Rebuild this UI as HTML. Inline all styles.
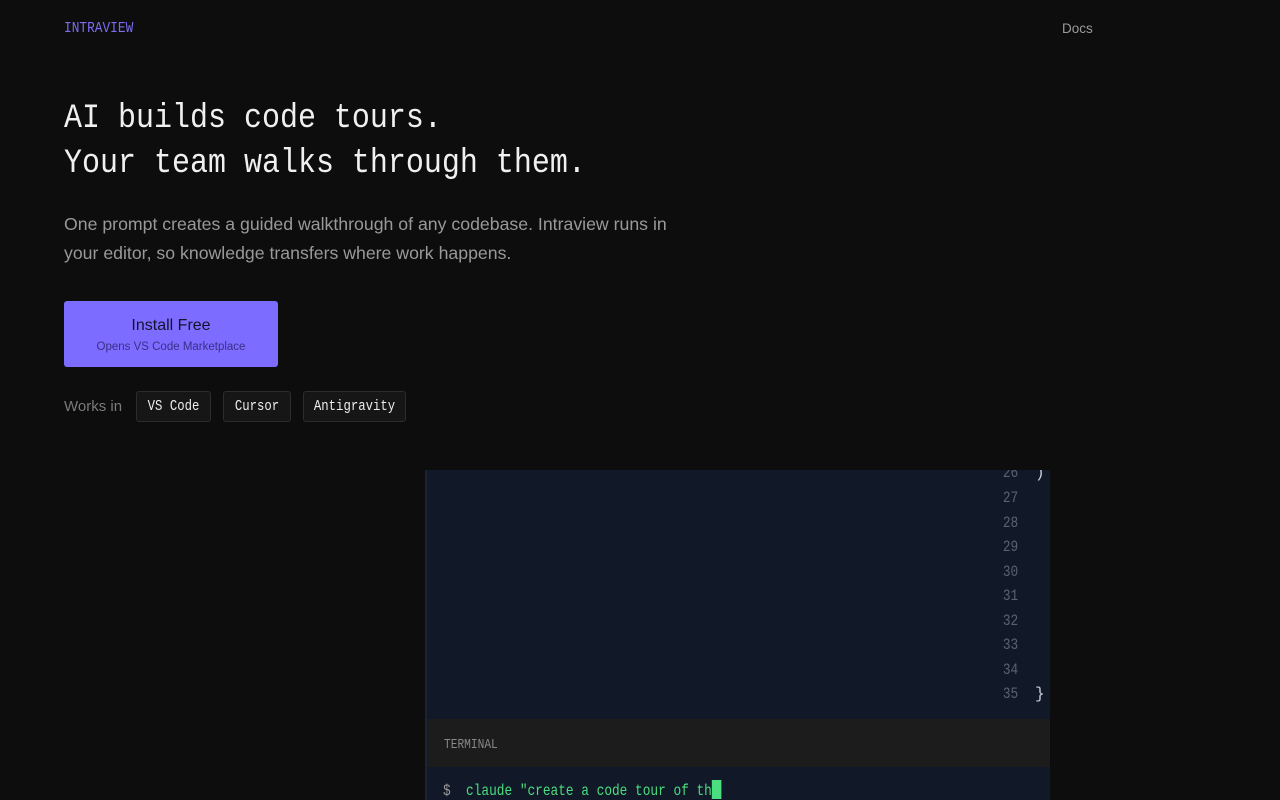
<!DOCTYPE html>
<html><head><meta charset="utf-8"><style>
*{margin:0;padding:0;box-sizing:border-box}
body{width:1280px;height:800px;overflow:hidden;background:#0d0d0e;font-family:"Liberation Sans",sans-serif;position:relative}
.mono{font-family:"Liberation Mono","DejaVu Sans Mono",monospace}
.c{display:inline-block;transform-origin:left center;white-space:pre}
.logo{position:absolute;left:64px;top:20px;font-size:15px;color:#7b6cf0}
.logo .c{transform:scaleX(.855)}
.docs{position:absolute;left:1062px;top:21px;font-size:13.5px;color:#9a9a9a}
h1{position:absolute;left:64px;top:97px;font-weight:400;font-size:34px;line-height:45px;color:#f0f0f0;white-space:nowrap}
h1 .c{transform:scaleX(.882)}
.sub{position:absolute;left:64px;top:210px;width:640px;font-size:17.7px;line-height:29px;color:#999}
.btn{position:absolute;left:64px;top:301px;width:214px;height:66px;background:#7c6cff;border-radius:3px;text-align:center}
.btn .a{font-size:16px;color:#16122e;margin-top:16px}
.btn .b{font-size:11.5px;color:#3a2f88;margin-top:6px}
.works{position:absolute;left:64px;top:398px;font-size:15px;color:#7a7a7a}
.tag{position:absolute;top:391px;height:31px;border:1px solid #2c2c2c;background:#161616;border-radius:3px;color:#eee;font-size:15px;line-height:29px;text-align:center;overflow:hidden}
.tag .c{transform:scaleX(.82);transform-origin:center}
.ed{position:absolute;left:425px;top:470px;width:625px;height:249px;background:#111827;border-left:2px solid #1c2333;overflow:hidden}
.ln{position:absolute;right:32px;width:30px;text-align:right;color:#5a6272;font-size:16px}
.ln .c{transform:scaleX(.8);transform-origin:right center}
.br{position:absolute;left:608px;color:#c8ccd4;font-size:16px}
.th{position:absolute;left:425px;top:719px;width:625px;height:48px;background:#1c1c1c;border-left:2px solid #1c2333}
.th span{position:absolute;left:17px;top:18px;font-size:14px;color:#888;transform:scaleX(.8);transform-origin:left}
.tb{position:absolute;left:425px;top:767px;width:625px;height:33px;background:#111827;border-left:2px solid #1c2333}
.tb .t{position:absolute;left:16px;top:13px;font-size:16px;color:#4ade80;white-space:pre;transform:scaleX(.8);transform-origin:left}
.cur{display:inline-block;width:12px;height:19px;background:#4ade80;vertical-align:-4px}
</style></head><body>
<div class="logo mono"><span class="c">INTRAVIEW</span></div>
<div class="docs">Docs</div>
<h1 class="mono"><span class="c">AI builds code tours.</span><br><span class="c">Your team walks through them.</span></h1>
<div class="sub">One prompt creates a guided walkthrough of any codebase. Intraview runs in your editor, so knowledge transfers where work happens.</div>
<div class="btn"><div class="a">Install Free</div><div class="b">Opens VS Code Marketplace</div></div>
<div class="works">Works in</div>
<div class="tag mono" style="left:136px;width:75px"><span class="c">VS Code</span></div>
<div class="tag mono" style="left:223px;width:68px"><span class="c">Cursor</span></div>
<div class="tag mono" style="left:303px;width:103px"><span class="c">Antigravity</span></div>
<div class="ed mono">
<div class="ln" style="top:-6px"><span class="c">26</span></div><div class="br" style="top:-6px">)</div>
<div class="ln" style="top:19px"><span class="c">27</span></div>
<div class="ln" style="top:44px"><span class="c">28</span></div>
<div class="ln" style="top:68px"><span class="c">29</span></div>
<div class="ln" style="top:93px"><span class="c">30</span></div>
<div class="ln" style="top:117px"><span class="c">31</span></div>
<div class="ln" style="top:142px"><span class="c">32</span></div>
<div class="ln" style="top:166px"><span class="c">33</span></div>
<div class="ln" style="top:191px"><span class="c">34</span></div>
<div class="ln" style="top:215px"><span class="c">35</span></div><div class="br" style="top:215px">}</div>
</div>
<div class="th mono"><span>TERMINAL</span></div>
<div class="tb mono"><div class="t"><span style="color:#999">$</span>  claude "create a code tour of th<span class="cur"></span></div></div>
</body></html>
